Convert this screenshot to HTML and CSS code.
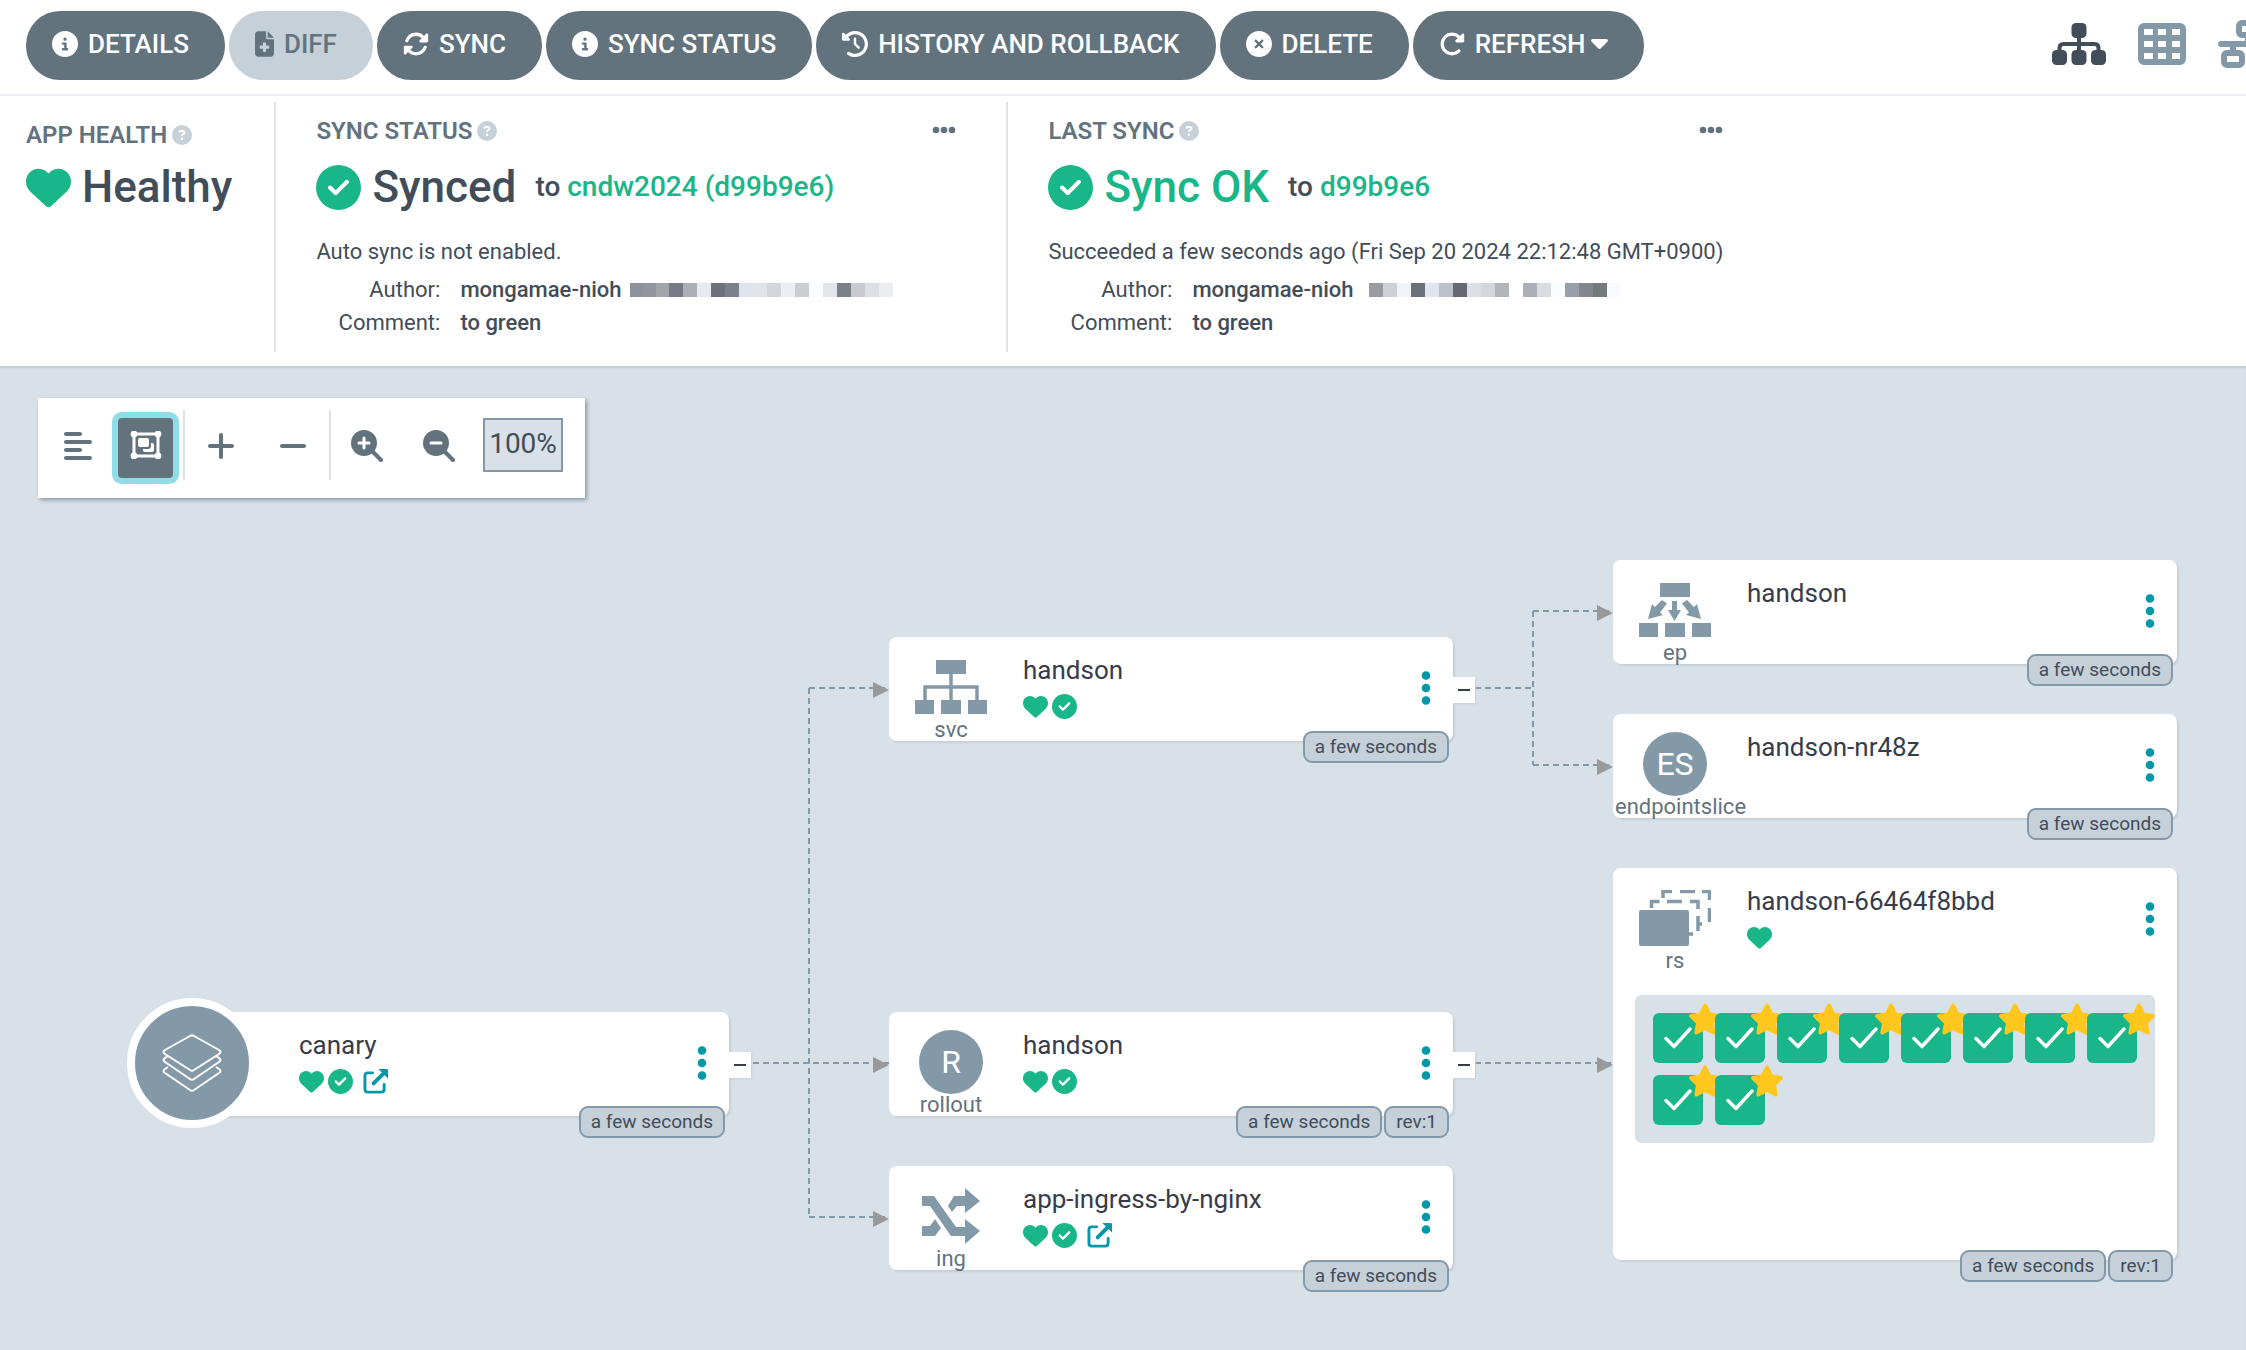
FILE: index.html
```html
<!DOCTYPE html>
<html lang="en">
<head>
<meta charset="utf-8">
<title>canary - Argo CD</title>
<link rel="stylesheet" href="styles.css">
</head>
<body>
<svg class="sprite" aria-hidden="true">
  <symbol id="i-info" viewBox="0 0 512 512"><path d="M256 512A256 256 0 1 0 256 0a256 256 0 1 0 0 512zM216 336h24V272H216c-13.3 0-24-10.7-24-24s10.7-24 24-24h48c13.3 0 24 10.7 24 24v88h8c13.3 0 24 10.7 24 24s-10.7 24-24 24H216c-13.3 0-24-10.7-24-24s10.7-24 24-24zm40-208a32 32 0 1 1 0 64 32 32 0 1 1 0-64z"/></symbol>
  <symbol id="i-check" viewBox="0 0 512 512"><path d="M256 512A256 256 0 1 0 256 0a256 256 0 1 0 0 512zM369 209L241 337c-9.4 9.4-24.6 9.4-33.9 0l-64-64c-9.4-9.4-9.4-24.6 0-33.9s24.6-9.4 33.9 0l47 47L335 175c9.4-9.4 24.6-9.4 33.9 0s9.4 24.6 0 33.9z"/></symbol>
  <symbol id="i-heart" viewBox="0 0 512 512"><path d="M47.6 300.4L228.3 469.1c7.5 7 17.4 10.9 27.7 10.9s20.2-3.9 27.7-10.9L464.4 300.4c30.4-28.3 47.6-68 47.6-109.5v-5.8c0-69.9-50.5-129.5-119.4-141C347 36.5 300.6 51.4 268 84L256 96 244 84c-32.6-32.6-79-47.5-124.6-39.9C50.5 55.6 0 115.2 0 185.1v5.8c0 41.5 17.2 81.2 47.6 109.5z"/></symbol>
  <symbol id="i-xmark" viewBox="0 0 512 512"><path d="M256 512A256 256 0 1 0 256 0a256 256 0 1 0 0 512zM175 175c9.4-9.4 24.6-9.4 33.9 0l47 47 47-47c9.4-9.4 24.6-9.4 33.9 0s9.4 24.6 0 33.9l-47 47 47 47c9.4 9.4 9.4 24.6 0 33.9s-24.6 9.4-33.9 0l-47-47-47 47c-9.4 9.4-24.6 9.4-33.9 0s-9.4-24.6 0-33.9l47-47-47-47c-9.4-9.4-9.4-24.6 0-33.9z"/></symbol>
  <symbol id="i-file" viewBox="0 0 384 512"><path fill-rule="evenodd" d="M0 64C0 28.7 28.7 0 64 0H224V128c0 17.7 14.3 32 32 32H384V448c0 35.3-28.7 64-64 64H64c-35.3 0-64-28.7-64-64V64zM256 0L384 128H256V0zM160 240v48h-48a16 16 0 0 0-16 16v32a16 16 0 0 0 16 16h48v48a16 16 0 0 0 16 16h32a16 16 0 0 0 16-16v-48h48a16 16 0 0 0 16-16v-32a16 16 0 0 0-16-16h-48v-48a16 16 0 0 0-16-16h-32a16 16 0 0 0-16 16z"/></symbol>
  <symbol id="i-sync" viewBox="0 0 512 512"><path d="M142.9 142.9c62.2-62.2 162.7-62.5 225.3-1L327 183c-6.9 6.9-8.9 17.2-5.2 26.2s12.5 14.8 22.2 14.8H472c13.3 0 24-10.7 24-24V72c0-9.7-5.8-18.5-14.8-22.2s-19.3-1.7-26.2 5.2L413.4 96.6c-87.6-86.5-228.7-86.2-315.8 1C73.2 122 55.6 150.7 44.8 181.4c-5.9 16.7 2.9 34.9 19.5 40.8s34.9-2.9 40.8-19.5c7.7-21.8 20.2-42.3 37.8-59.8zM16 312V440c0 9.7 5.8 18.5 14.8 22.2s19.3 1.7 26.2-5.2l41.6-41.6c87.6 86.5 228.7 86.2 315.8-1c24.4-24.4 42.1-53.1 52.9-83.7c5.9-16.7-2.9-34.9-19.5-40.8s-34.9 2.9-40.8 19.5c-7.7 21.8-20.2 42.3-37.8 59.8c-62.2 62.2-162.7 62.5-225.3 1L185 329c6.9-6.9 8.9-17.2 5.2-26.2s-12.5-14.8-22.2-14.8H40c-13.3 0-24 10.7-24 24z"/></symbol>
  <symbol id="i-refresh" viewBox="0 0 512 512"><path d="M463.5 224H472c13.3 0 24-10.7 24-24V72c0-9.7-5.8-18.5-14.8-22.2s-19.3-1.7-26.2 5.2L413.4 96.6c-87.6-86.5-228.7-86.2-315.8 1c-87.5 87.5-87.5 229.3 0 316.8s229.3 87.5 316.8 0c12.5-12.5 12.5-32.8 0-45.3s-32.8-12.5-45.3 0c-62.5 62.5-163.8 62.5-226.3 0s-62.5-163.8 0-226.3c62.2-62.2 162.7-62.5 225.3-1L327 183c-6.9 6.9-8.9 17.2-5.2 26.2s12.5 14.8 22.2 14.8H463.5z"/></symbol>
  <symbol id="i-history" viewBox="0 0 512 512"><path d="M75 75L41 41C25.9 25.9 0 36.6 0 57.9V168c0 13.3 10.7 24 24 24H134.1c21.4 0 32.1-25.9 17-41l-30.8-30.8C155 85.5 203 64 256 64c106 0 192 86 192 192s-86 192-192 192c-40.8 0-78.6-12.7-109.7-34.4c-14.5-10.1-34.4-6.6-44.6 7.9s-6.6 34.4 7.9 44.6C151.2 495 201.7 512 256 512c141.4 0 256-114.6 256-256S397.4 0 256 0C185.3 0 121.3 28.7 75 75zm181 53c-13.3 0-24 10.7-24 24V256c0 6.4 2.5 12.5 7 17l72 72c9.4 9.4 24.6 9.4 33.9 0s9.4-24.6 0-33.9l-65-65V152c0-13.3-10.7-24-24-24z"/></symbol>
  <symbol id="i-caret" viewBox="0 192 320 192"><path d="M137.4 374.6c12.5 12.5 32.8 12.5 45.3 0l128-128c9.2-9.2 11.9-22.9 6.9-34.9s-16.6-19.8-29.6-19.8L32 192c-12.9 0-24.6 7.8-29.6 19.8s-2.2 25.7 6.9 34.9l128 128z"/></symbol>
  <symbol id="i-help" viewBox="0 0 512 512"><path d="M256 512A256 256 0 1 0 256 0a256 256 0 1 0 0 512zM169.8 165.3c7.9-22.3 29.1-37.3 52.8-37.3h58.3c34.9 0 63.1 28.3 63.1 63.1c0 22.6-12.1 43.5-31.7 54.8L280 264.4c-.2 13-10.9 23.6-24 23.6c-13.3 0-24-10.7-24-24V250.5c0-8.6 4.6-16.5 12.1-20.8l44.3-25.4c4.7-2.7 7.6-7.7 7.6-13.1c0-8.4-6.8-15.1-15.1-15.1H222.6c-3.4 0-6.4 2.1-7.5 5.3l-.4 1.2c-4.4 12.5-18.2 19-30.6 14.6s-19-18.2-14.6-30.6l.4-1.2zM224 352a32 32 0 1 1 64 0 32 32 0 1 1 -64 0z"/></symbol>
  <symbol id="i-external" viewBox="0 0 26 26"><path d="M10 4H5Q2 4 2 7v14q0 3 3 3h14q3 0 3-3v-5" fill="none" stroke="currentColor" stroke-width="3" stroke-linecap="round"/><path d="M11 15L21 5" stroke="currentColor" stroke-width="4" stroke-linecap="round"/><path d="M16 0h8.500q1.500 0 1.500 1.500V10z"/></symbol>
  <symbol id="i-star" viewBox="24 0 528 512"><path d="M316.9 18C311.6 7 300.4 0 288.1 0s-23.4 7-28.8 18L195 150.3 51.4 171.500c-12 1.800-22 10.200-25.700 21.700s-.7 24.200 7.900 32.700L137.800 329 113.200 474.700c-2 12 3 24.200 12.900 31.300s23 8 33.800 2.300l128.300-68.500 128.300 68.500c10.800 5.700 23.900 4.900 33.800-2.300s14.900-19.300 12.900-31.300L438.500 329 542.700 225.900c8.600-8.500 11.700-21.200 7.900-32.700s-13.700-19.900-25.700-21.700L381.200 150.300 316.900 18z"/></symbol>
  <symbol id="i-tree" viewBox="0 0 54 42"><g><rect x="19.500" y="0" width="15" height="15" rx="4.500"/><rect x="0" y="27" width="15" height="15" rx="4.500"/><rect x="19.500" y="27" width="15" height="15" rx="4.500"/><rect x="39" y="27" width="15" height="15" rx="4.500"/><path d="M27 13v16M7.500 29v-4q0-4 4-4h31q4 0 4 4v4" fill="none" stroke="currentColor" stroke-width="4"/></g></symbol>
  <symbol id="i-grid" viewBox="0 0 48 42"><path fill-rule="evenodd" d="M6 0h36a6 6 0 0 1 6 6v30a6 6 0 0 1-6 6H6a6 6 0 0 1-6-6V6a6 6 0 0 1 6-6zM6 6v6h9V6zM20 6v6h8V6zM34 6v6h8V6zM6 18v6h9v-6zM20 18v6h8v-6zM34 18v6h8v-6zM6 30v6h9v-6zM20 30v6h8v-6zM34 30v6h8v-6z"/></symbol>
  <symbol id="i-network" viewBox="0 0 60 48"><g fill="none" stroke="currentColor" stroke-width="6"><rect x="21" y="3" width="18" height="12" rx="3"/><rect x="6" y="33" width="18" height="12" rx="3"/><rect x="36" y="33" width="18" height="12" rx="3"/><path d="M3 24h54M30 15v9M15 24v9M45 24v9" stroke-linecap="round"/></g></symbol>
  <symbol id="i-dots-h" viewBox="0 0 24 8"><circle cx="4" cy="4" r="3.300"/><circle cx="12" cy="4" r="3.300"/><circle cx="20" cy="4" r="3.300"/></symbol>
  <symbol id="i-dots-v" viewBox="0 0 10 36"><circle cx="5" cy="5.500" r="4.300"/><circle cx="5" cy="18" r="4.300"/><circle cx="5" cy="30.500" r="4.300"/></symbol>
  <symbol id="i-align" viewBox="0 0 28 28"><path d="M2 2h14M2 10h24M2 18h14M2 26h24" fill="none" stroke="currentColor" stroke-width="4" stroke-linecap="round"/></symbol>
  <symbol id="i-group" viewBox="0 0 32 28"><g fill="none" stroke="currentColor" stroke-width="3"><path d="M4 3h24v22H4z"/></g><circle cx="4" cy="3" r="3.400"/><circle cx="28" cy="3" r="3.400"/><circle cx="4" cy="25" r="3.400"/><circle cx="28" cy="25" r="3.400"/><rect x="8" y="7" width="11" height="9" rx="2"/><path d="M21 12h1q2 0 2 2v5q0 2-2 2h-7q-2 0-2-2v-1h5q3 0 3-3z"/></symbol>
  <symbol id="i-plus" viewBox="0 0 26 26"><path d="M13 2v22M2 13h22" fill="none" stroke="currentColor" stroke-width="4" stroke-linecap="round"/></symbol>
  <symbol id="i-minus" viewBox="0 0 26 26"><path d="M2 13h22" fill="none" stroke="currentColor" stroke-width="4" stroke-linecap="round"/></symbol>
  <symbol id="i-zoom-in" viewBox="0 0 32 32"><circle cx="13" cy="13" r="13"/><path d="M20 20l10 10" stroke="currentColor" stroke-width="4" stroke-linecap="round"/><path d="M13 8v10M8 13h10" stroke="#fff" stroke-width="3" stroke-linecap="round"/></symbol>
  <symbol id="i-zoom-out" viewBox="0 0 32 32"><circle cx="13" cy="13" r="13"/><path d="M20 20l10 10" stroke="currentColor" stroke-width="4" stroke-linecap="round"/><path d="M8 13h10" stroke="#fff" stroke-width="3" stroke-linecap="round"/></symbol>
  <symbol id="i-pod-check" viewBox="0 0 28 22"><path d="M2 11.500l8 8L26 2" fill="none" stroke="currentColor" stroke-width="3.400" stroke-linecap="round" stroke-linejoin="round"/></symbol>
  <symbol id="k-app" viewBox="0 0 60 58"><g fill="none" stroke="currentColor" stroke-width="2" stroke-linejoin="round"><path d="M28 2q2-1.500 4 0l25 14q3 2 0 4L32 36q-2 1.500-4 0L3 20q-3-2 0-4z"/><path d="M6 22l-3 2q-3 2 0 4l25 17q2 1.500 4 0l25-17q3-2 0-4l-3-2"/><path d="M6 33l-3 2q-3 2 0 4l25 17q2 1.500 4 0l25-17q3-2 0-4l-3-2"/></g></symbol>
  <symbol id="k-svc" viewBox="0 0 72 54"><path d="M21 0h30v14H21zM0 40h19v14H0zM26 40h20v14H26zM53 40h19v14H53z"/><path d="M36 14v26M10 40V27h52v13" fill="none" stroke="currentColor" stroke-width="3.500"/></symbol>
  <symbol id="k-ep" viewBox="0 0 72 54"><path d="M21 0h30v14H21zM0 40h19v14H0zM26 40h20v14H26zM53 40h19v14H53zM33 18h5v9h4l-6.500 11L29 27h4zM23 17l5 3.500-7 9 3 2.500-15 4 4-15 3 3zM48 17l-5 3.500 7 9-3 2.500 15 4-4-15-3 3z"/></symbol>
  <symbol id="k-rs" viewBox="0 0 72 56"><rect y="20" width="50" height="36" rx="2"/><g fill="none" stroke="currentColor" stroke-width="3.500"><path d="M12.500 18v-6.500h8M28 11.500h15M51 11.500h8V19M59 26v15M54 44h-4M24 8V1.500h9M41 1.500h15M63 1.500h7.500V10M70.500 18v14M60 34h3"/></g></symbol>
  <symbol id="k-ing" viewBox="0 0 58 56"><path d="M0 8h12l22 31h9v-8l15 12-15 13v-8H29L8 18H0zM0 38h8l5-7 6 9-6 8H0zM43 0l15 13-15 12v-7h-8l-5 6-4-6 6-10h11z"/></symbol>
</svg>

<header class="toolbar">
  <div class="actions">
    <button class="btn" type="button"><svg class="icon"><use href="#i-info"/></svg>DETAILS</button>
    <button class="btn btn-disabled" type="button" disabled><svg class="icon icon-file"><use href="#i-file"/></svg>DIFF</button>
    <button class="btn" type="button"><svg class="icon"><use href="#i-sync"/></svg>SYNC</button>
    <button class="btn" type="button"><svg class="icon"><use href="#i-info"/></svg>SYNC STATUS</button>
    <button class="btn" type="button"><svg class="icon"><use href="#i-history"/></svg>HISTORY AND ROLLBACK</button>
    <button class="btn" type="button"><svg class="icon"><use href="#i-xmark"/></svg>DELETE</button>
    <button class="btn" type="button"><svg class="icon"><use href="#i-refresh"/></svg>REFRESH<svg class="caret"><use href="#i-caret"/></svg></button>
  </div>
  <nav class="views" aria-label="Views">
    <a class="view view-active" href="#tree" aria-label="Tree"><svg class="view-tree"><use href="#i-tree"/></svg></a>
    <a class="view" href="#pods" aria-label="Pods"><svg class="view-grid"><use href="#i-grid"/></svg></a>
    <a class="view" href="#network" aria-label="Network"><svg class="view-network"><use href="#i-network"/></svg></a>
  </nav>
</header>

<section class="status">
  <div class="panel panel-health">
    <div class="panel-head"><h2>APP HEALTH</h2><svg class="help"><use href="#i-help"/></svg></div>
    <div class="summary"><svg class="state"><use href="#i-heart"/></svg><strong>Healthy</strong></div>
  </div>
  <div class="panel panel-sync">
    <div class="panel-head"><h2>SYNC STATUS</h2><svg class="help"><use href="#i-help"/></svg><button class="more" type="button" aria-label="More"><svg><use href="#i-dots-h"/></svg></button></div>
    <div class="summary"><svg class="state"><use href="#i-check"/></svg><strong>Synced</strong><span class="target">to <a href="#revision">cndw2024 (d99b9e6)</a></span></div>
    <p class="message">Auto sync is not enabled.</p>
    <dl class="commit">
      <dt>Author:</dt>
      <dd>mongamae-nioh <svg class="mask" width="264" height="14" viewBox="0 0 264 14" shape-rendering="crispEdges"><path fill="#8d919c" d="M0 0h12v14H0z"/><path fill="#92959f" d="M12 0h14v14H12z"/><path fill="#a2a5aa" d="M26 0h13v14H26z"/><path fill="#767a86" d="M39 0h14v14H39z"/><path fill="#adafb7" d="M53 0h14v14H53z"/><path fill="#e6e9ee" d="M67 0h14v14H67z"/><path fill="#6c717a" d="M81 0h14v14H81z"/><path fill="#7b8089" d="M95 0h14v14H95z"/><path fill="#dfe3ec" d="M109 0h14v14h-14z"/><path fill="#e0e3e8" d="M123 0h14v14h-14z"/><path fill="#d2d6da" d="M137 0h14v14h-14z"/><path fill="#eceef3" d="M151 0h14v14h-14z"/><path fill="#cacdd1" d="M165 0h14v14h-14z"/><path fill="#fafbfe" d="M179 0h14v14h-14z"/><path fill="#e3e5eb" d="M193 0h14v14h-14z"/><path fill="#7b808b" d="M207 0h14v14h-14z"/><path fill="#c8cacf" d="M221 0h14v14h-14z"/><path fill="#dcdee4" d="M235 0h14v14h-14z"/><path fill="#ebedf0" d="M249 0h14v14h-14z"/></svg></dd>
      <dt>Comment:</dt>
      <dd>to green</dd>
    </dl>
  </div>
  <div class="panel panel-last">
    <div class="panel-head"><h2>LAST SYNC</h2><svg class="help"><use href="#i-help"/></svg><button class="more" type="button" aria-label="More"><svg><use href="#i-dots-h"/></svg></button></div>
    <div class="summary"><svg class="state"><use href="#i-check"/></svg><strong class="ok">Sync OK</strong><span class="target">to <a href="#commit">d99b9e6</a></span></div>
    <p class="message">Succeeded a few seconds ago (Fri Sep 20 2024 22:12:48 GMT+0900)</p>
    <dl class="commit">
      <dt>Author:</dt>
      <dd>mongamae-nioh <svg class="mask mask-wide" width="252" height="14" viewBox="0 0 252 14" shape-rendering="crispEdges"><path fill="#9b9ca3" d="M0 0h14v14H0z"/><path fill="#cdd0d4" d="M14 0h14v14H14z"/><path fill="#f0f4f8" d="M28 0h14v14H28z"/><path fill="#6a717a" d="M42 0h14v14H42z"/><path fill="#dfe6ef" d="M56 0h14v14H56z"/><path fill="#bac1cb" d="M70 0h14v14H70z"/><path fill="#666872" d="M84 0h14v14H84z"/><path fill="#dcdfe5" d="M98 0h14v14H98z"/><path fill="#d4d6dc" d="M112 0h14v14h-14z"/><path fill="#b2b5ba" d="M126 0h14v14h-14z"/><path fill="#acafba" d="M154 0h14v14h-14z"/><path fill="#dadddf" d="M168 0h14v14h-14z"/><path fill="#fafdfe" d="M182 0h14v14h-14z"/><path fill="#999eab" d="M196 0h14v14h-14z"/><path fill="#84858e" d="M210 0h14v14h-14z"/><path fill="#747a7c" d="M224 0h14v14h-14z"/><path fill="#f8faff" d="M238 0h14v14h-14z"/></svg></dd>
      <dt>Comment:</dt>
      <dd>to green</dd>
    </dl>
  </div>
</section>

<main class="canvas">
  <div class="graph-tools">
    <button class="tool" type="button" aria-label="Compact"><svg class="s28"><use href="#i-align"/></svg></button>
    <button class="tool tool-active" type="button" aria-label="Group nodes"><svg class="group"><use href="#i-group"/></svg></button>
    <span class="sep"></span>
    <button class="tool" type="button" aria-label="Expand all"><svg class="s26"><use href="#i-plus"/></svg></button>
    <button class="tool" type="button" aria-label="Collapse all"><svg class="s26"><use href="#i-minus"/></svg></button>
    <span class="sep"></span>
    <button class="tool" type="button" aria-label="Zoom in"><svg class="s32"><use href="#i-zoom-in"/></svg></button>
    <button class="tool" type="button" aria-label="Zoom out"><svg class="s32"><use href="#i-zoom-out"/></svg></button>
    <input class="zoom" type="text" value="100%" aria-label="Zoom level">
  </div>

  <svg class="edges" width="1640" height="984" viewBox="0 0 1640 984" aria-hidden="true">
    <g fill="none" stroke="#8499a8" stroke-width="2" stroke-dasharray="6 4">
      <path d="M753 697H889"/>
      <path d="M809 322V851"/>
      <path d="M809 322H889"/>
      <path d="M809 851H889"/>
      <path d="M1475 322H1533"/>
      <path d="M1533 245V399"/>
      <path d="M1533 245H1613"/>
      <path d="M1533 399H1613"/>
      <path d="M1475 697H1613"/>
    </g>
    <path fill="#999" d="M873 316l16 8-16 8zM873 691l16 8-16 8zM873 845l16 8-16 8zM1597 239l16 8-16 8zM1597 393l16 8-16 8zM1597 691l16 8-16 8z"/>
  </svg>

  <article class="node node-canary">
    <div class="app-circle"><svg><use href="#k-app"/></svg></div>
    <div class="kind"></div>
    <div class="info"><span class="name">canary</span><span class="marks"><svg><use href="#i-heart"/></svg><svg><use href="#i-check"/></svg><a href="#open" aria-label="Open application"><svg><use href="#i-external"/></svg></a></span></div>
    <button class="menu" type="button" aria-label="Menu"><svg><use href="#i-dots-v"/></svg></button>
    <button class="fold" type="button" aria-label="Collapse"></button>
    <div class="badges"><span>a few seconds</span></div>
  </article>

  <article class="node node-svc">
    <div class="kind"><div class="kind-icon"><svg class="k72"><use href="#k-svc"/></svg></div>svc</div>
    <div class="info"><span class="name">handson</span><span class="marks"><svg><use href="#i-heart"/></svg><svg><use href="#i-check"/></svg></span></div>
    <button class="menu" type="button" aria-label="Menu"><svg><use href="#i-dots-v"/></svg></button>
    <button class="fold" type="button" aria-label="Collapse"></button>
    <div class="badges"><span>a few seconds</span></div>
  </article>

  <article class="node node-rollout">
    <div class="kind"><div class="kind-icon"><span class="letters">R</span></div>rollout</div>
    <div class="info"><span class="name">handson</span><span class="marks"><svg><use href="#i-heart"/></svg><svg><use href="#i-check"/></svg></span></div>
    <button class="menu" type="button" aria-label="Menu"><svg><use href="#i-dots-v"/></svg></button>
    <button class="fold" type="button" aria-label="Collapse"></button>
    <div class="badges"><span>a few seconds</span><span>rev:1</span></div>
  </article>

  <article class="node node-ing">
    <div class="kind"><div class="kind-icon"><svg class="k58"><use href="#k-ing"/></svg></div>ing</div>
    <div class="info"><span class="name">app-ingress-by-nginx</span><span class="marks"><svg><use href="#i-heart"/></svg><svg><use href="#i-check"/></svg><a href="#ingress" aria-label="Open ingress"><svg><use href="#i-external"/></svg></a></span></div>
    <button class="menu" type="button" aria-label="Menu"><svg><use href="#i-dots-v"/></svg></button>
    <div class="badges"><span>a few seconds</span></div>
  </article>

  <article class="node node-ep">
    <div class="kind"><div class="kind-icon"><svg class="k72"><use href="#k-ep"/></svg></div>ep</div>
    <div class="info"><span class="name">handson</span></div>
    <button class="menu" type="button" aria-label="Menu"><svg><use href="#i-dots-v"/></svg></button>
    <div class="badges"><span>a few seconds</span></div>
  </article>

  <article class="node node-es">
    <div class="kind"><div class="kind-icon"><span class="letters">ES</span></div>endpointslice</div>
    <div class="info"><span class="name">handson-nr48z</span></div>
    <button class="menu" type="button" aria-label="Menu"><svg><use href="#i-dots-v"/></svg></button>
    <div class="badges"><span>a few seconds</span></div>
  </article>

  <article class="node node-rs">
    <div class="kind"><div class="kind-icon"><svg class="k72 k-tall"><use href="#k-rs"/></svg></div>rs</div>
    <div class="info"><span class="name">handson-66464f8bbd</span><span class="marks"><svg><use href="#i-heart"/></svg></span></div>
    <button class="menu" type="button" aria-label="Menu"><svg><use href="#i-dots-v"/></svg></button>
    <div class="pods">
      <span class="pod"><svg class="tick"><use href="#i-pod-check"/></svg><svg class="star"><use href="#i-star"/></svg></span>
      <span class="pod"><svg class="tick"><use href="#i-pod-check"/></svg><svg class="star"><use href="#i-star"/></svg></span>
      <span class="pod"><svg class="tick"><use href="#i-pod-check"/></svg><svg class="star"><use href="#i-star"/></svg></span>
      <span class="pod"><svg class="tick"><use href="#i-pod-check"/></svg><svg class="star"><use href="#i-star"/></svg></span>
      <span class="pod"><svg class="tick"><use href="#i-pod-check"/></svg><svg class="star"><use href="#i-star"/></svg></span>
      <span class="pod"><svg class="tick"><use href="#i-pod-check"/></svg><svg class="star"><use href="#i-star"/></svg></span>
      <span class="pod"><svg class="tick"><use href="#i-pod-check"/></svg><svg class="star"><use href="#i-star"/></svg></span>
      <span class="pod"><svg class="tick"><use href="#i-pod-check"/></svg><svg class="star"><use href="#i-star"/></svg></span>
      <span class="pod"><svg class="tick"><use href="#i-pod-check"/></svg><svg class="star"><use href="#i-star"/></svg></span>
      <span class="pod"><svg class="tick"><use href="#i-pod-check"/></svg><svg class="star"><use href="#i-star"/></svg></span>
    </div>
    <div class="badges"><span>a few seconds</span><span>rev:1</span></div>
  </article>
</main>
</body>
</html>
```

FILE: styles.css
```css
* {
  box-sizing: border-box;
}

body {
  margin: 0;
  min-height: 100vh;
  display: flex;
  flex-direction: column;
  background: #fff;
  color: #424d5a;
  font-family: Roboto, "Noto Sans", sans-serif;
  font-size: 22px;
  overflow-x: hidden;
}

h2, p, dl, dd {
  margin: 0;
}

button {
  border: 0;
  padding: 0;
  background: none;
  color: inherit;
  font-family: inherit;
}

svg {
  display: block;
  flex: none;
  fill: currentColor;
}

.sprite {
  position: absolute;
  width: 0;
  height: 0;
}

/* Top toolbar */

.toolbar {
  display: flex;
  align-items: flex-start;
  padding: 11px 0 14px 26px;
  border-bottom: 2px solid #eceff3;
  overflow: hidden;
}

.actions {
  display: flex;
  gap: 4px;
}

.btn {
  display: flex;
  align-items: center;
  gap: 10px;
  height: 69px;
  padding: 0 36px 4px 26px;
  border-radius: 34px;
  background: #62737e;
  color: #fff;
  font-size: 26px;
  font-weight: 500;
  white-space: nowrap;
}

.btn-disabled {
  background: #c6d0d9;
  color: #62737e;
}

.icon {
  width: 26px;
  height: 26px;
}

.icon-file {
  width: 19px;
}

.caret {
  width: 17px;
  height: 10px;
  margin-left: -4px;
}

.views {
  display: flex;
  align-items: center;
  gap: 32px;
  margin: 9px -32px 0 auto;
}

.view {
  color: #8499a8;
}

.view-active {
  color: #424d5a;
}

.view-tree {
  width: 54px;
  height: 42px;
}

.view-grid {
  width: 48px;
  height: 42px;
}

.view-network {
  width: 60px;
  height: 48px;
}

/* Status panels */

.status {
  display: flex;
  padding: 6px 0 14px;
  min-height: 270px;
}

.panel {
  padding: 15px 40px 0;
}

.panel + .panel {
  border-left: 2px solid #dce2e6;
}

.panel-health {
  padding: 19px 42px 0 26px;
}

.panel-sync {
  flex: 0 1 732px;
  padding-right: 50px;
}

.panel-head {
  display: flex;
  align-items: center;
  gap: 5px;
  color: #62737e;
}

.panel-head h2 {
  font-size: 24px;
  line-height: 28px;
  font-weight: 600;
}

.help {
  width: 20px;
  height: 20px;
  color: #c6d0d9;
}

.more {
  margin: 0 0 2px auto;
}

.more svg {
  width: 24px;
  height: 8px;
}

.summary {
  display: flex;
  align-items: center;
  margin-top: 16px;
  line-height: 52px;
}

.panel-health .summary {
  margin-top: 12px;
}

.summary strong {
  margin-left: 11px;
  font-size: 44px;
  font-weight: 500;
}

.state {
  width: 45px;
  height: 45px;
  color: #18b688;
}

.ok, .target a {
  color: #18b688;
}

.target {
  margin-left: 19px;
  font-size: 28px;
  font-weight: 500;
}

.target a {
  text-decoration: none;
}

.message {
  margin-top: 26px;
  line-height: 26px;
}

.commit {
  display: grid;
  grid-template-columns: 124px 1fr;
  column-gap: 20px;
  margin-top: 8px;
  line-height: 33px;
}

.commit dt {
  text-align: right;
}

.commit dd {
  display: flex;
  align-items: center;
  gap: 9px;
  font-weight: 500;
}

.mask-wide {
  margin-left: 7px;
}

/* Resource graph */

.canvas {
  position: relative;
  flex: 1;
  min-height: 984px;
  padding: 32px 38px;
  background: #d9e1e8;
  box-shadow: inset 0 3px 2px -1px #c3cdd4;
}

.graph-tools {
  display: inline-flex;
  align-items: flex-start;
  height: 100px;
  padding: 12px 22px 0 18px;
  background: #fff;
  box-shadow: 2px 2px 4px #8499a8;
  color: #62737e;
}

.tool {
  display: flex;
  align-items: center;
  justify-content: center;
  width: 72px;
  height: 72px;
}

.tool:first-child {
  width: 44px;
}

.tool-active {
  width: 55px;
  height: 60px;
  margin: 8px 10px 0 18px;
  padding-bottom: 6px;
  border-radius: 4px;
  background: #62737e;
  box-shadow: 0 0 0 6px #8fdde6;
  color: #fff;
}

.sep {
  width: 2px;
  height: 70px;
  background: #dce2e8;
}

.s26 {
  width: 26px;
  height: 26px;
}

.s28 {
  width: 28px;
  height: 28px;
}

.s32 {
  width: 32px;
  height: 32px;
}

.group {
  width: 32px;
  height: 28px;
}

.zoom {
  width: 80px;
  height: 54px;
  margin: 8px 0 0 8px;
  padding: 0 0 4px;
  border: 2px solid #8499a8;
  border-radius: 0;
  background: #d9e1e8;
  color: #424d5a;
  font-family: inherit;
  font-size: 28px;
  text-align: center;
}

.edges {
  position: absolute;
  left: 0;
  top: 0;
}

.node {
  position: absolute;
  display: flex;
  flex-wrap: wrap;
  align-items: flex-start;
  width: 564px;
  height: 104px;
  border-radius: 8px;
  background: #fff;
  box-shadow: 2px 2px 2px #c6d0d9;
}

.node-canary { left: 165px; top: 646px; }
.node-svc { left: 889px; top: 271px; }
.node-rollout { left: 889px; top: 646px; }
.node-ing { left: 889px; top: 800px; }
.node-ep { left: 1613px; top: 194px; }
.node-es { left: 1613px; top: 348px; }
.node-rs { left: 1613px; top: 502px; height: 392px; align-content: flex-start; }

.kind {
  width: 120px;
  height: 127px;
  margin: 18px 12px -41px 2px;
  color: #62737e;
  line-height: 26px;
  text-align: center;
  white-space: nowrap;
}

.kind-icon {
  display: flex;
  align-items: center;
  justify-content: center;
  height: 64px;
  margin-bottom: -2px;
  color: #8499a8;
}

.k72 {
  width: 72px;
  height: 54px;
}

.k-tall {
  height: 56px;
}

.k58 {
  width: 58px;
  height: 56px;
}

.letters {
  width: 64px;
  border-radius: 50%;
  background: #8499a8;
  color: #fff;
  font-size: 32px;
  line-height: 64px;
}

.app-circle {
  position: absolute;
  left: -38px;
  top: -14px;
  display: flex;
  align-items: center;
  justify-content: center;
  width: 130px;
  height: 130px;
  border: 8px solid #fff;
  border-radius: 50%;
  background: #8499a8;
  color: #fff;
}

.app-circle svg {
  width: 60px;
  height: 58px;
}

.info {
  flex: 1;
  padding-top: 18px;
}

.name {
  display: block;
  color: #363c4a;
  font-size: 26px;
  line-height: 30px;
}

.marks {
  display: flex;
  gap: 4px;
  margin-top: 9px;
  color: #18b688;
}

.marks svg {
  width: 25px;
  height: 25px;
}

.marks a {
  margin-left: 6px;
  color: #0398a9;
}

.menu {
  margin: 33px 22px 0 0;
  color: #0398a9;
}

.menu svg {
  width: 10px;
  height: 36px;
}

.fold {
  position: absolute;
  left: 564px;
  top: 40px;
  display: flex;
  align-items: center;
  justify-content: center;
  width: 22px;
  height: 26px;
  background: #fff;
  box-shadow: 1px 1px 2px #c6d0d9;
}

.fold::before {
  content: "";
  width: 12px;
  height: 2px;
  background: #363c4a;
}

.badges {
  position: absolute;
  right: 4px;
  bottom: -22px;
  display: flex;
  gap: 2px;
}

.badges span {
  height: 32px;
  padding: 0 10px;
  border: 2px solid #8499a8;
  border-radius: 9px;
  background: #c6d0d9;
  font-size: 19px;
  line-height: 27px;
  white-space: nowrap;
}

.pods {
  display: flex;
  flex-wrap: wrap;
  gap: 12px;
  width: 520px;
  height: 148px;
  margin: 23px 22px 0;
  padding: 18px 6px 18px 18px;
  border-radius: 6px;
  background: #d9e1e8;
}

.pod {
  position: relative;
  display: flex;
  align-items: center;
  justify-content: center;
  width: 50px;
  height: 50px;
  border-radius: 6px;
  background: #18b688;
  color: #fff;
}

.tick {
  width: 28px;
  height: 22px;
}

.star {
  position: absolute;
  left: 36px;
  top: -10px;
  width: 32px;
  height: 32px;
  color: #ffc61e;
}
```
